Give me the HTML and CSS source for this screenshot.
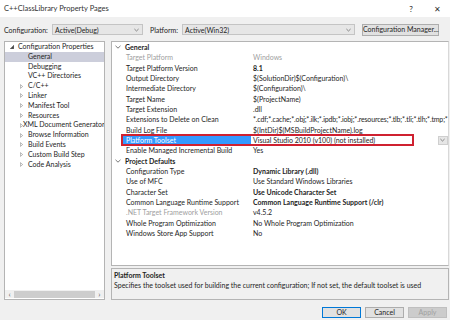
FILE: index.html
```html
<!DOCTYPE html>
<html lang="en">
<head>
  <meta charset="UTF-8" />
  <title>C++ClassLibrary Property Pages</title>
  <link rel="stylesheet" href="styles.css">
</head>
<body>
<div class="dialog">
  <header class="titlebar">
    <span class="title">C++ClassLibrary Property Pages</span>
    <span class="help">?</span>
    <span class="close">&#x2715;</span>
  </header>

  <div class="toolbar">
    <span class="label">Configuration:</span>
    <div class="combo combo-config">
      <span>Active(Debug)</span>
      <svg class="chev" viewBox="0 0 6 4"><path d="M0.5 0.8 L3 3.2 L5.5 0.8" /></svg>
    </div>
    <span class="label label-platform">Platform:</span>
    <div class="combo combo-platform">
      <span>Active(Win32)</span>
      <svg class="chev" viewBox="0 0 6 4"><path d="M0.5 0.8 L3 3.2 L5.5 0.8" /></svg>
    </div>
    <button class="btn btn-manager">Configuration Manager...</button>
  </div>

  <div class="main">
    <!-- Baum links -->
    <div class="tree">
      <ul class="tree-list">
        <li class="node open"><span class="exp"><svg viewBox="0 0 4 4"><path d="M4 0 L4 4 L0 4 Z" /></svg></span>Configuration Properties</li>
        <li class="leaf selected">General</li>
        <li class="leaf">Debugging</li>
        <li class="leaf">VC++ Directories</li>
        <li class="node"><span class="exp"><svg viewBox="0 0 4 6"><path d="M0.5 0.5 L3.5 3 L0.5 5.5 Z" /></svg></span>C/C++</li>
        <li class="node"><span class="exp"><svg viewBox="0 0 4 6"><path d="M0.5 0.5 L3.5 3 L0.5 5.5 Z" /></svg></span>Linker</li>
        <li class="node"><span class="exp"><svg viewBox="0 0 4 6"><path d="M0.5 0.5 L3.5 3 L0.5 5.5 Z" /></svg></span>Manifest Tool</li>
        <li class="node"><span class="exp"><svg viewBox="0 0 4 6"><path d="M0.5 0.5 L3.5 3 L0.5 5.5 Z" /></svg></span>Resources</li>
        <li class="node"><span class="exp"><svg viewBox="0 0 4 6"><path d="M0.5 0.5 L3.5 3 L0.5 5.5 Z" /></svg></span>XML Document Generator</li>
        <li class="node"><span class="exp"><svg viewBox="0 0 4 6"><path d="M0.5 0.5 L3.5 3 L0.5 5.5 Z" /></svg></span>Browse Information</li>
        <li class="node"><span class="exp"><svg viewBox="0 0 4 6"><path d="M0.5 0.5 L3.5 3 L0.5 5.5 Z" /></svg></span>Build Events</li>
        <li class="node"><span class="exp"><svg viewBox="0 0 4 6"><path d="M0.5 0.5 L3.5 3 L0.5 5.5 Z" /></svg></span>Custom Build Step</li>
        <li class="node"><span class="exp"><svg viewBox="0 0 4 6"><path d="M0.5 0.5 L3.5 3 L0.5 5.5 Z" /></svg></span>Code Analysis</li>
      </ul>
      <div class="hscroll">
        <span class="arrow">&lsaquo;</span>
        <span class="thumb"></span>
        <span class="arrow">&rsaquo;</span>
      </div>
    </div>

    <div class="right">
      <!-- Eigenschaften -->
      <div class="grid">
        <div class="cat"><svg class="cat-chev" viewBox="0 0 6 4"><path d="M0.5 0.8 L3 3.2 L5.5 0.8" /></svg>General</div>
        <div class="row disabled"><span class="name">Target Platform</span><span class="val">Windows</span></div>
        <div class="row"><span class="name">Target Platform Version</span><span class="val bold">8.1</span></div>
        <div class="row"><span class="name">Output Directory</span><span class="val">$(SolutionDir)$(Configuration)\</span></div>
        <div class="row"><span class="name">Intermediate Directory</span><span class="val">$(Configuration)\</span></div>
        <div class="row"><span class="name">Target Name</span><span class="val">$(ProjectName)</span></div>
        <div class="row"><span class="name">Target Extension</span><span class="val">.dll</span></div>
        <div class="row"><span class="name">Extensions to Delete on Clean</span><span class="val tight">*.cdf;*.cache;*.obj;*.ilk;*.ipdb;*.iobj;*.resources;*.tlb;*.tli;*.tlh;*.tmp;*</span></div>
        <div class="row"><span class="name">Build Log File</span><span class="val">$(IntDir)$(MSBuildProjectName).log</span></div>
        <div class="row active">
          <span class="name">Platform Toolset</span>
          <span class="val">Visual Studio 2010 (v100) (not installed)</span>
          <span class="drop"><svg viewBox="0 0 6 4"><path d="M0.5 0.8 L3 3.2 L5.5 0.8" /></svg></span>
          <span class="mark"></span>
        </div>
        <div class="row"><span class="name">Enable Managed Incremental Build</span><span class="val">Yes</span></div>
        <div class="cat"><svg class="cat-chev" viewBox="0 0 6 4"><path d="M0.5 0.8 L3 3.2 L5.5 0.8" /></svg>Project Defaults</div>
        <div class="row"><span class="name">Configuration Type</span><span class="val bold">Dynamic Library (.dll)</span></div>
        <div class="row"><span class="name">Use of MFC</span><span class="val">Use Standard Windows Libraries</span></div>
        <div class="row"><span class="name">Character Set</span><span class="val bold">Use Unicode Character Set</span></div>
        <div class="row"><span class="name">Common Language Runtime Support</span><span class="val bold">Common Language Runtime Support (/clr)</span></div>
        <div class="row"><span class="name dim">.NET Target Framework Version</span><span class="val">v4.5.2</span></div>
        <div class="row"><span class="name">Whole Program Optimization</span><span class="val">No Whole Program Optimization</span></div>
        <div class="row"><span class="name">Windows Store App Support</span><span class="val">No</span></div>
      </div>

      <div class="desc">
        <div class="desc-title">Platform Toolset</div>
        <div class="desc-text">Specifies the toolset used for building the current configuration; If not set, the default toolset is used</div>
      </div>
    </div>
  </div>

  <div class="footer">
    <button class="btn btn-ok">OK</button>
    <button class="btn">Cancel</button>
    <button class="btn btn-off">Apply</button>
  </div>
</div>
</body>
</html>
```

FILE: styles.css
```css
* {
  margin: 0;
  padding: 0;
  box-sizing: border-box;
}

html, body {
  width: 450px;
  height: 320px;
  overflow: hidden;
  background: #f0f0f0;
  font-family: 'Lato', 'Noto Sans', sans-serif;
  font-size: 7px;
  color: #1e1e1e;
}

/* Titelleiste */
.titlebar {
  height: 17px;
  background: #ffffff;
  display: flex;
  align-items: center;
  padding-left: 4px;
  font-size: 7.5px;
}

.title {
  flex: 1;
  color: #333;
}

.help {
  width: 26px;
  text-align: center;
  font-size: 8px;
}

.close {
  width: 26px;
  text-align: center;
  font-size: 8px;
  color: #333;
}

/* Konfigurationszeile */
.toolbar {
  display: flex;
  align-items: center;
  height: 11px;
  margin-top: 7px;
  padding-left: 4px;
  white-space: nowrap;
}

.label {
  width: 48px;
}

.label-platform {
  width: 32px;
  margin-left: 7px;
}

.combo {
  height: 11px;
  display: flex;
  align-items: center;
  justify-content: space-between;
  background: #e6e6e6;
  border: 1px solid #c4c4c4;
  padding: 0 3px 0 2px;
}

.combo-config {
  width: 91px;
}

.combo-platform {
  width: 173px;
}

.chev {
  width: 5px;
  height: 4px;
}

.chev path, .cat-chev path, .drop path {
  fill: none;
  stroke: #555;
  stroke-width: 0.8;
}

.btn {
  font-family: inherit;
  font-size: 7px;
  color: #1e1e1e;
  background: #e1e1e1;
  border: 1px solid #adadad;
  height: 11px;
  line-height: 9px;
  white-space: nowrap;
}

.btn-manager {
  width: 77px;
  margin-left: 7px;
  height: 12px;
}

/* Hauptbereich */
.main {
  display: flex;
  gap: 6px;
  height: 259px;
  margin-top: 6px;
  padding: 0 4px;
}

.tree {
  width: 101px;
  background: #ffffff;
  border: 1px solid #b4b4b4;
  display: flex;
  flex-direction: column;
  justify-content: space-between;
}

.tree-list {
  list-style: none;
}

.tree-list li {
  height: 9.8px;
  line-height: 9.8px;
  display: flex;
  align-items: center;
  white-space: nowrap;
  overflow: hidden;
}

.tree-list .node.open {
  padding-left: 5px;
}

.tree-list .node {
  padding-left: 15px;
}

.tree-list .leaf {
  padding-left: 23px;
}

.tree-list .selected {
  background: #cccedb;
}

.exp {
  width: 8px;
  display: flex;
  align-items: center;
}

.exp svg {
  width: 3px;
  height: 5px;
}

.node.open .exp svg {
  width: 4px;
  height: 4px;
}

.node.open .exp path {
  fill: #444;
}

.node .exp path {
  fill: none;
  stroke: #777;
  stroke-width: 0.7;
}

.hscroll {
  height: 8px;
  margin-bottom: 1px;
  display: flex;
  align-items: center;
  background: #f0f0f0;
}

.hscroll .arrow {
  width: 9px;
  text-align: center;
  font-size: 8px;
  line-height: 8px;
  color: #606060;
}

.hscroll .thumb {
  flex: 1;
  height: 7px;
  background: #cdcdcd;
}

.right {
  flex: 1;
  display: flex;
  flex-direction: column;
  gap: 2px;
}

.grid {
  height: 225px;
  background: #ffffff;
  border: 1px solid #b4b4b4;
  border-right-color: #d8d8d8;
}

.cat {
  height: 10.33px;
  display: flex;
  align-items: center;
  padding-left: 3px;
  font-weight: 700;
}

.cat-chev {
  width: 6px;
  height: 4px;
  margin-right: 4px;
}

.row {
  height: 10.33px;
  display: flex;
  align-items: center;
  position: relative;
  padding-left: 11px;
  white-space: nowrap;
}

.row .name {
  width: 128px;
  height: 100%;
  display: flex;
  align-items: center;
  padding-left: 3px;
  overflow: hidden;
}

.row .val {
  flex: 1;
  padding-left: 2px;
  overflow: hidden;
}

.row .val.tight {
  letter-spacing: -0.15px;
}

.bold {
  font-weight: 700;
}

.disabled .name, .disabled .val, .dim {
  color: #a0a0a0;
}

.row.active .name {
  background: #3399ff;
  color: #ffffff;
}

.drop {
  width: 10px;
  height: 9px;
  background: #e6e6e6;
  border: 1px solid #cfcfcf;
  display: flex;
  align-items: center;
  justify-content: center;
}

.drop svg {
  width: 5px;
  height: 4px;
}

/* rote Markierung */
.mark {
  position: absolute;
  left: 9px;
  top: -1px;
  width: 293px;
  height: 12px;
  border: 2px solid #cf2130;
}

.desc {
  flex: 1;
  border: 1px solid #b4b4b4;
  padding: 1px 2px;
}

.desc-title {
  font-weight: 700;
  line-height: 10px;
}

.desc-text {
  line-height: 10px;
  white-space: nowrap;
}

/* Fußzeile */
.footer {
  display: flex;
  justify-content: flex-end;
  gap: 4px;
  margin-top: 7px;
  padding-right: 3px;
}

.footer .btn {
  width: 39px;
}

.btn-ok {
  border-color: #0078d7;
}

.btn-off {
  color: #a0a0a0;
  background: #cccccc;
  border-color: #bfbfbf;
}
```
